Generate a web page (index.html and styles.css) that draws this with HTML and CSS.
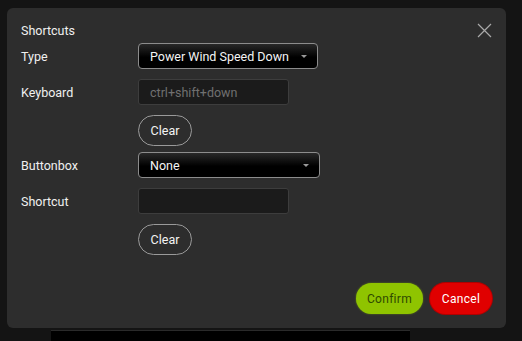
FILE: index.html
```html
<!DOCTYPE html>
<html lang="en">

<head>
    <meta charset="UTF-8">
    <meta name="viewport" content="width=device-width, initial-scale=1.0">
    <title>Shortcuts</title>
    <link rel="stylesheet" href="styles.css">
</head>

<body>
    <div class="modal">
        <div class="modal-header">
            <h1>Shortcuts</h1>
            <button class="close-btn" aria-label="Close">
                <svg width="15" height="15" viewBox="0 0 15 15">
                    <path d="M1 1 L14 14 M14 1 L1 14" stroke="#a9a9a9" stroke-width="1.2" fill="none" />
                </svg>
            </button>
        </div>

        <div class="form">
            <div class="row">
                <label>Type</label>
                <div class="select select-type">
                    <span>Power Wind Speed Down</span>
                    <span class="caret"></span>
                </div>
            </div>
            <div class="row">
                <label>Keyboard</label>
                <input type="text" class="form-control" placeholder="ctrl+shift+down">
            </div>
            <div class="row row-clear">
                <label></label>
                <button class="btn-clear">Clear</button>
            </div>
            <div class="row">
                <label>Buttonbox</label>
                <div class="select select-box">
                    <span>None</span>
                    <span class="caret"></span>
                </div>
            </div>
            <div class="row">
                <label>Shortcut</label>
                <input type="text" class="form-control">
            </div>
            <div class="row">
                <label></label>
                <button class="btn-clear">Clear</button>
            </div>
        </div>

        <div class="modal-footer">
            <button class="btn btn-confirm">Confirm</button>
            <button class="btn btn-cancel">Cancel</button>
        </div>
    </div>

    <!-- page behind the dialog -->
    <div class="behind"></div>
</body>

</html>
```

FILE: styles.css
```css
* {
    margin: 0;
    padding: 0;
    box-sizing: border-box;
    font-family: Roboto, "Liberation Sans", sans-serif;
}

body {
    background-color: #141414;
    height: 100vh;
    overflow: hidden;
    padding: 8px 0 0 7px;
}

.modal {
    width: 499px;
    height: 320px;
    background-color: #2d2d2d;
    border-radius: 6px;
    padding: 14px 14px 14px 14px;
    display: flex;
    flex-direction: column;
}

.modal-header {
    display: flex;
    justify-content: space-between;
    align-items: center;
    height: 16px;
}

.modal-header h1 {
    font-size: 12.5px;
    font-weight: 400;
    color: #f0f0f0;
}

.close-btn {
    background: none;
    border: none;
    width: 15px;
    height: 15px;
    display: flex;
    cursor: pointer;
}

.form {
    margin-top: 5px;
}

.row {
    display: flex;
    align-items: center;
    margin-bottom: 10px;
}

.row-clear {
    margin-bottom: 6px;
}

.row label {
    width: 117px;
    font-size: 12.5px;
    color: #f0f0f0;
}

.select {
    height: 26px;
    border: 1px solid #8c8c8c;
    border-radius: 4px;
    background: linear-gradient(#282828, #000 55%);
    display: flex;
    align-items: center;
    justify-content: space-between;
    padding: 0 10px 0 11px;
    font-size: 12.5px;
    color: #f4f4f4;
}

.select-type {
    width: 180px;
}

.select-box {
    width: 182px;
}

.caret {
    width: 0;
    height: 0;
    border-left: 3px solid transparent;
    border-right: 3px solid transparent;
    border-top: 3px solid #9a9a9a;
}

.form-control {
    width: 151px;
    height: 26px;
    background-color: #1b1b1b;
    border: 1px solid #3d3d3d;
    border-radius: 3px;
    padding: 0 11px;
    font-size: 12.5px;
    color: #ddd;
    outline: none;
}

.form-control::placeholder {
    color: #707070;
}

.btn-clear {
    width: 54px;
    height: 31px;
    border: 1px solid #9a9a9a;
    border-radius: 16px;
    background: transparent;
    color: #f4f4f4;
    font-size: 12.5px;
    cursor: pointer;
}

.modal-footer {
    margin-top: auto;
    display: flex;
    justify-content: flex-end;
    gap: 7px;
}

.btn {
    height: 31px;
    border: none;
    border-radius: 16px;
    font-size: 12px;
    letter-spacing: 0.3px;
    cursor: pointer;
}

.btn-confirm {
    width: 67px;
    background-color: #8fc400;
    color: #2f4a00;
    box-shadow: 0 0 2px rgba(143, 196, 0, 0.6);
}

.btn-cancel {
    width: 62px;
    background-color: #e00000;
    color: #fff;
    box-shadow: 0 0 0 1px #b00000;
}

.behind {
    width: 359px;
    height: 11px;
    margin: 2px 0 0 44px;
    background-color: #000;
    border-top: 1px solid #2a2a2a;
}
```
